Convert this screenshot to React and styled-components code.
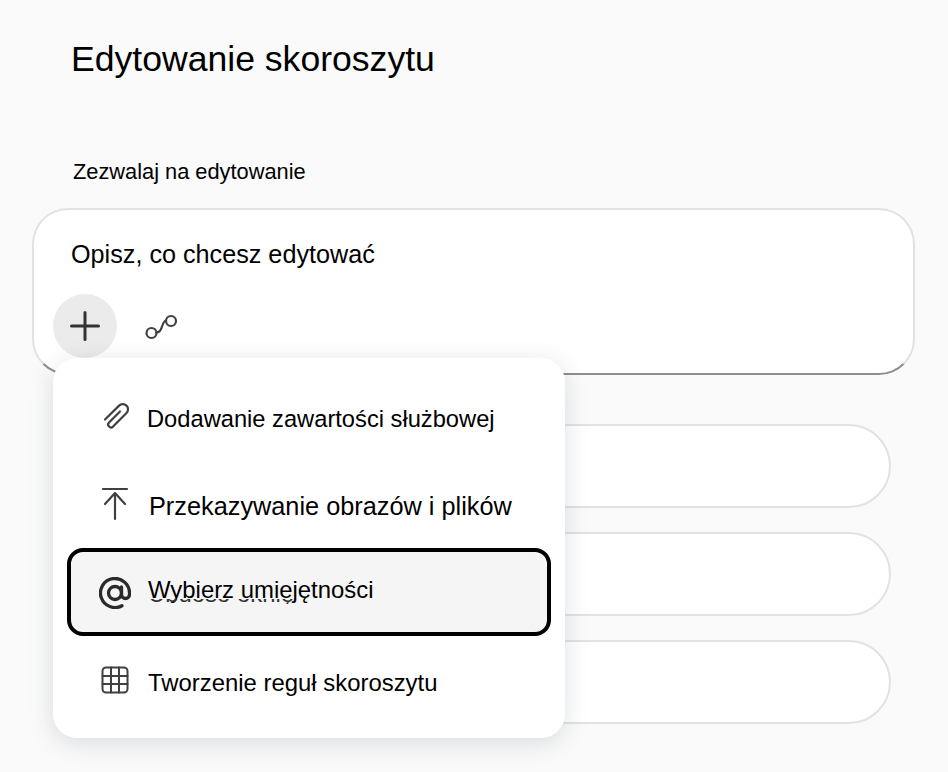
import React from 'react';
import styled, { createGlobalStyle } from 'styled-components';

const GlobalStyle = createGlobalStyle`
  html, body {
    margin: 0;
    padding: 0;
    background: #fafafa;
  }
  body {
    font-family: "Liberation Sans", Arial, sans-serif;
    color: #000;
  }
`;

const Page = styled.div`
  position: relative;
  width: 948px;
  height: 772px;
  overflow: hidden;
  box-sizing: border-box;
  padding: 39px 33px 0 32px;
`;

const Title = styled.h1`
  margin: 0 0 0 39px;
  font-size: 35.6px;
  line-height: 40px;
  font-weight: 400;
`;

const Label = styled.div`
  margin: 81px 0 0 41px;
  font-size: 21.8px;
  line-height: 24px;
`;

const Composer = styled.div`
  box-sizing: border-box;
  margin-top: 24px;
  width: 883px;
  height: 167px;
  background: #fff;
  border: 2px solid #e2e2e2;
  border-bottom-color: #8e8e8e;
  border-radius: 36px;
  padding: 29px 0 0 19px;
`;

const Prompt = styled.div`
  margin-left: 18px;
  font-size: 25.2px;
  line-height: 30px;
`;

const ComposerTools = styled.div`
  display: flex;
  align-items: center;
  gap: 26px;
  margin-top: 25px;
`;

const AddButton = styled.div`
  display: flex;
  align-items: center;
  justify-content: center;
  width: 64px;
  height: 64px;
  border-radius: 50%;
  background: #ebebeb;
`;

const Suggestions = styled.div`
  display: flex;
  flex-direction: column;
  gap: 24px;
  margin: 49px 0 0 24px;
`;

const Suggestion = styled.div`
  box-sizing: border-box;
  width: 835px;
  height: 84px;
  background: #fff;
  border: 2px solid #e2e2e2;
  border-radius: 42px;
`;

const Menu = styled.div`
  position: absolute;
  left: 53px;
  top: 358px;
  box-sizing: border-box;
  width: 512px;
  height: 380px;
  background: #fff;
  border-radius: 24px;
  box-shadow: 0 5px 24px rgba(30, 45, 70, 0.15);
  padding: 20px 14px 0;
`;

const MenuItem = styled.div`
  display: flex;
  align-items: center;
  box-sizing: border-box;
  width: 484px;
  height: ${(p) => p.$height}px;
  padding-left: ${(p) => p.$pad}px;
  gap: ${(p) => p.$gap}px;
  font-size: 23.9px;
  ${(p) => p.$active && `
    position: relative;
    background: #f5f5f5;
    border: 4px solid #000;
    border-radius: 16px;
  `}
`;

const IconSlot = styled.span`
  display: flex;
  flex: none;
  width: 34px;
  justify-content: center;
  padding: ${(p) => p.$pt || 0}px 0 ${(p) => p.$pb || 0}px;
`;

const Stroke = styled.svg`
  display: block;
  fill: none;
  stroke: ${(p) => p.$color || '#404040'};
  stroke-linecap: round;
  stroke-linejoin: round;
`;

// text of the row underneath, only its lower edge peeks out below the label
const GhostText = styled.span`
  position: absolute;
  left: 77px;
  top: 47px;
  height: 5px;
  overflow: hidden;
  font-size: 23.9px;
  color: #333;
  white-space: nowrap;
`;

const GhostInner = styled.span`
  display: block;
  margin-top: -17px;
  line-height: 24px;
`;

const LabelText = styled.span`
  padding: ${(p) => p.$pt || 0}px 0 ${(p) => p.$pb || 0}px;
  font-size: ${(p) => (p.$size ? `${p.$size}px` : 'inherit')};
`;

export default function App() {
  return (
    <Page>
      <GlobalStyle />
      <Title>Edytowanie skoroszytu</Title>
      <Label>Zezwalaj na edytowanie</Label>
      <Composer>
        <Prompt>Opisz, co chcesz edytować</Prompt>
        <ComposerTools>
          <AddButton>
            <Stroke $color="#333" width="32" height="32" viewBox="0 0 32 32" strokeWidth="3">
              <path d="M16 2.500v27M2.500 16h27" />
            </Stroke>
          </AddButton>
          <Stroke width="36" height="28" viewBox="0 0 36 28" strokeWidth="2.2">
            <circle cx="8.500" cy="21" r="5" />
            <circle cx="28" cy="9" r="5" />
            <path d="M13.500 20.500c4 0 4.500-3 5.500-6s2-6 4-6" />
          </Stroke>
        </ComposerTools>
      </Composer>
      <Suggestions>
        <Suggestion />
        <Suggestion />
        <Suggestion />
      </Suggestions>

      <Menu>
        <MenuItem $height={80} $pad={31} $gap={15}>
          <IconSlot $pb={4}>
            <Stroke width="30" height="30" viewBox="0 0 30 30" strokeWidth="2.2">
              <path d="M20 10.500 9 21.500a2.900 2.900 0 0 0 4.100 4.100L26.500 12a5.200 5.200 0 0 0-7.400-7.400L5 18.500" />
            </Stroke>
          </IconSlot>
          <LabelText $pt={2} $size={23.7}>Dodawanie zawartości służbowej</LabelText>
        </MenuItem>
        <MenuItem $height={90} $pad={31} $gap={17}>
          <IconSlot $pt={2}>
            <Stroke width="28" height="34" viewBox="0 0 28 34" strokeWidth="2.2">
              <path d="M2 2h24M14 32V6M4 17 14 6l10 11" />
            </Stroke>
          </IconSlot>
          <LabelText $pt={6} $size={25.3}>Przekazywanie obrazów i plików</LabelText>
        </MenuItem>
        <MenuItem $active $height={88} $pad={27} $gap={16}>
          <IconSlot $pt={2}>
            <Stroke $color="#2b2b2b" width="32" height="32" viewBox="0 0 32 32" strokeWidth="3.300">
              <circle cx="16" cy="16" r="6.500" />
              <path d="M22.500 10v7.500a4 4 0 0 0 8 0V16A14.500 14.500 0 1 0 23 28.700" />
            </Stroke>
          </IconSlot>
          <LabelText $pb={4}>Wybierz umiejętności</LabelText>
          <GhostText>
            <GhostInner>Ubuoso oknię</GhostInner>
          </GhostText>
        </MenuItem>
        <MenuItem $height={92} $pad={31} $gap={16}>
          <IconSlot $pb={4}>
            <Stroke width="28" height="28" viewBox="0 0 28 28" strokeWidth="2">
              <rect x="1.500" y="1.500" width="25" height="25" rx="3.500" />
              <path d="M10 1.500v25M18 1.500v25M1.500 10h25M1.500 18h25" />
            </Stroke>
          </IconSlot>
          <LabelText $pt={2}>Tworzenie reguł skoroszytu</LabelText>
        </MenuItem>
      </Menu>
    </Page>
  );
}
